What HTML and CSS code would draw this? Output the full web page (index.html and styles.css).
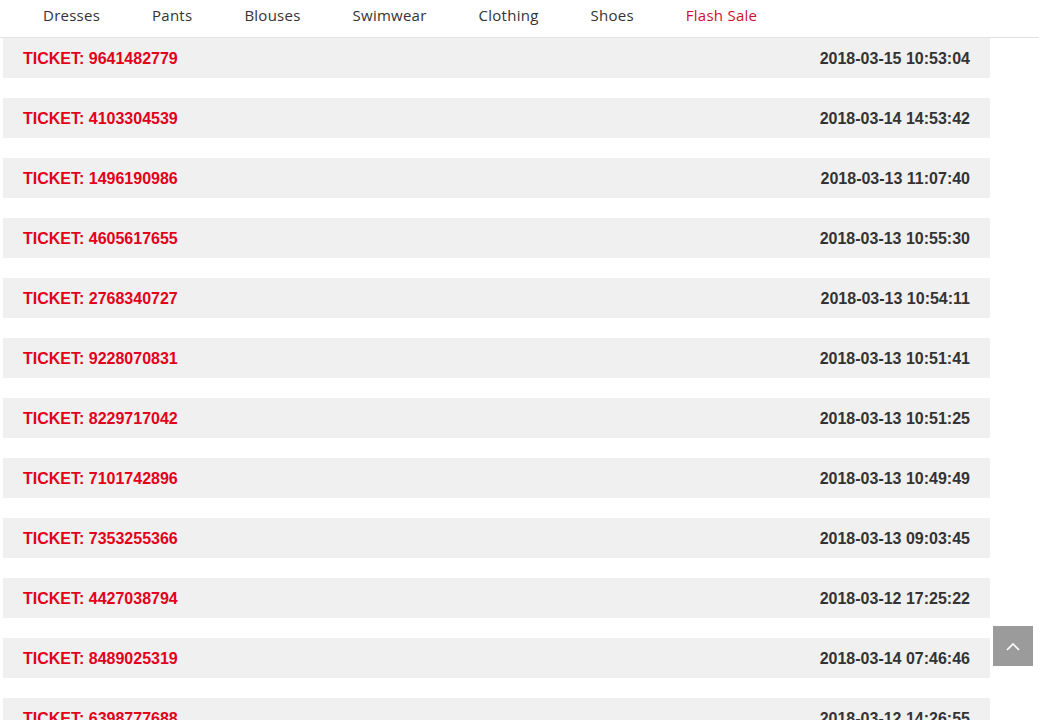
FILE: index.html
```html
<!DOCTYPE html>
<html>
<head>
<meta charset="utf-8">
<link rel="stylesheet" href="styles.css">
</head>
<body>
<nav class="nav">
  <a class="nav-item">Dresses</a>
  <a class="nav-item">Pants</a>
  <a class="nav-item">Blouses</a>
  <a class="nav-item">Swimwear</a>
  <a class="nav-item">Clothing</a>
  <a class="nav-item">Shoes</a>
  <a class="nav-item sale">Flash Sale</a>
</nav>
<main class="list">
  <div class="ticket"><span class="id">TICKET: 9641482779</span><span class="date">2018-03-15 10:53:04</span></div>
  <div class="ticket"><span class="id">TICKET: 4103304539</span><span class="date">2018-03-14 14:53:42</span></div>
  <div class="ticket"><span class="id">TICKET: 1496190986</span><span class="date">2018-03-13 11:07:40</span></div>
  <div class="ticket"><span class="id">TICKET: 4605617655</span><span class="date">2018-03-13 10:55:30</span></div>
  <div class="ticket"><span class="id">TICKET: 2768340727</span><span class="date">2018-03-13 10:54:11</span></div>
  <div class="ticket"><span class="id">TICKET: 9228070831</span><span class="date">2018-03-13 10:51:41</span></div>
  <div class="ticket"><span class="id">TICKET: 8229717042</span><span class="date">2018-03-13 10:51:25</span></div>
  <div class="ticket"><span class="id">TICKET: 7101742896</span><span class="date">2018-03-13 10:49:49</span></div>
  <div class="ticket"><span class="id">TICKET: 7353255366</span><span class="date">2018-03-13 09:03:45</span></div>
  <div class="ticket"><span class="id">TICKET: 4427038794</span><span class="date">2018-03-12 17:25:22</span></div>
  <div class="ticket"><span class="id">TICKET: 8489025319</span><span class="date">2018-03-14 07:46:46</span></div>
  <div class="ticket"><span class="id">TICKET: 6398777688</span><span class="date">2018-03-12 14:26:55</span></div>
</main>
<a class="to-top" aria-label="Back to top">
  <svg width="14" height="9" viewBox="0 0 14 9"><path d="M1 8 L7 2 L13 8" fill="none" stroke="#fff" stroke-width="1.6"/></svg>
</a>
</body>
</html>
```
FILE: styles.css
```css
html, body {
  margin: 0;
  padding: 0;
  background: #fff;
  overflow: hidden;
}
body {
  font-family: "Liberation Sans", Arial, sans-serif;
}
.nav {
  display: flex;
  align-items: flex-start;
  gap: 52px;
  height: 37px;
  padding-left: 43px;
  border-bottom: 1px solid #e2e2e2;
  box-sizing: content-box;
}
.nav-item {
  font-family: "Open Sans", sans-serif;
  font-size: 15px;
  letter-spacing: 0.25px;
  color: #333;
  line-height: 30px;
}
.nav-item.sale {
  color: #d0102b;
}
.list {
  display: flex;
  flex-direction: column;
  gap: 20px;
  padding-left: 3px;
  width: 987px;
}
.ticket {
  display: flex;
  justify-content: space-between;
  align-items: center;
  height: 40px;
  padding: 2px 20px 0;
  box-sizing: border-box;
  background: #f0f0f0;
  font-weight: bold;
  font-size: 16px;
}
.id {
  color: #e2001a;
}
.date {
  color: #333;
}
.to-top {
  position: fixed;
  right: 6px;
  top: 626px;
  width: 40px;
  height: 40px;
  background: #9b9b9b;
  display: flex;
  align-items: center;
  justify-content: center;
}
```
